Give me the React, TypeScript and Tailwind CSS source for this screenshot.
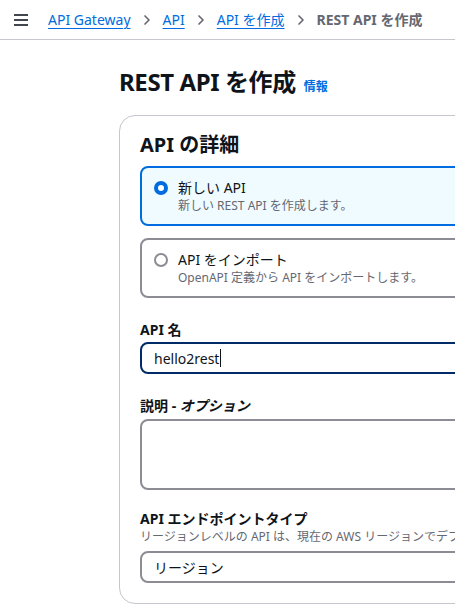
import { ChevronRight } from 'lucide-react';

const font = 'font-["Noto_Sans","Noto_Sans_CJK_JP",sans-serif]';

function Breadcrumbs() {
  const links = ['API Gateway', 'API', 'API を作成'];
  return (
    <nav className="flex items-center text-[14px] leading-5">
      {links.map((l) => (
        <span key={l} className="flex items-center">
          <a className="text-[#006ce0] underline underline-offset-[3px] decoration-1">{l}</a>
          <ChevronRight className="w-4 h-4 mx-2 text-[#656871]" strokeWidth={2.5} />
        </span>
      ))}
      <span className="font-bold text-[#656871]">REST API を作成</span>
    </nav>
  );
}

function RadioCard({ title, desc, checked }: { title: string; desc: string; checked?: boolean }) {
  return (
    <div
      className={`flex gap-[10px] rounded-lg border-2 pl-3 py-[10px] ${
        checked ? 'border-[#006ce0] bg-[#f0fbff]' : 'border-[#8c8c94] bg-white'
      }`}
    >
      <span className="h-5 flex items-center">
        <span
          className={`w-[14px] h-[14px] rounded-full ${
            checked ? 'border-[4px] border-[#006ce0] bg-white' : 'border-2 border-[#8c8c94]'
          }`}
        />
      </span>
      <div>
        <div className="text-[14px] leading-5 text-[#0f141a]">{title}</div>
        <div className="text-[12px] leading-4 text-[#656871]">{desc}</div>
      </div>
    </div>
  );
}

export default function App() {
  return (
    <div className={`w-[455px] h-[606px] overflow-hidden bg-white text-[#0f141a] ${font}`}>
      <header className="h-10 border-b border-[#c6c6cd] flex items-center">
        <svg width="14" height="12" viewBox="0 0 14 12" className="ml-[14px] mr-[20px]">
          <path d="M0 1h14M0 6h14M0 11h14" stroke="#424650" strokeWidth="2" />
        </svg>
        <Breadcrumbs />
      </header>

      <main className="pl-[119px] pt-[27px]">
        <div className="flex items-baseline gap-2">
          <h1 className="text-[24px] leading-[30px] font-bold tracking-[-0.4px]">REST API を作成</h1>
          <a className="text-[12px] font-bold text-[#006ce0]">情報</a>
        </div>

        <section className="mt-[18px] w-[600px] rounded-2xl border border-[#c6c6cd] px-5 pt-[17px] pb-5">
          <h2 className="text-[20px] leading-6 font-bold">API の詳細</h2>

          <div className="mt-[9px] flex flex-col gap-3">
            <RadioCard title="新しい API" desc="新しい REST API を作成します。" checked />
            <RadioCard title="API をインポート" desc="OpenAPI 定義から API をインポートします。" />
          </div>

          <div className="mt-[22px]">
            <label className="block text-[14px] leading-5 font-bold">API 名</label>
            <div className="mt-[2px] h-8 rounded-lg border-2 border-[#002b66] flex items-center px-3 text-[14px]">
              hello2rest
              <span className="w-px h-[18px] bg-[#0f141a] ml-[1px]" />
            </div>
          </div>

          <div className="mt-[22px]">
            <label className="block text-[14px] leading-5 font-bold">
              説明 - <i>オプション</i>
            </label>
            <div className="mt-[3px] h-[71px] rounded-lg border-2 border-[#8c8c94]" />
          </div>

          <div className="mt-[19px]">
            <label className="block text-[14px] leading-5 font-bold">API エンドポイントタイプ</label>
            <div className="text-[12px] leading-4 text-[#656871] whitespace-nowrap">
              リージョンレベルの API は、現在の AWS リージョンでデプロイされます。
            </div>
            <div className="mt-[6px] h-8 rounded-lg border-2 border-[#8c8c94] flex items-center px-3 text-[14px]">
              リージョン
            </div>
          </div>
        </section>
      </main>
    </div>
  );
}
